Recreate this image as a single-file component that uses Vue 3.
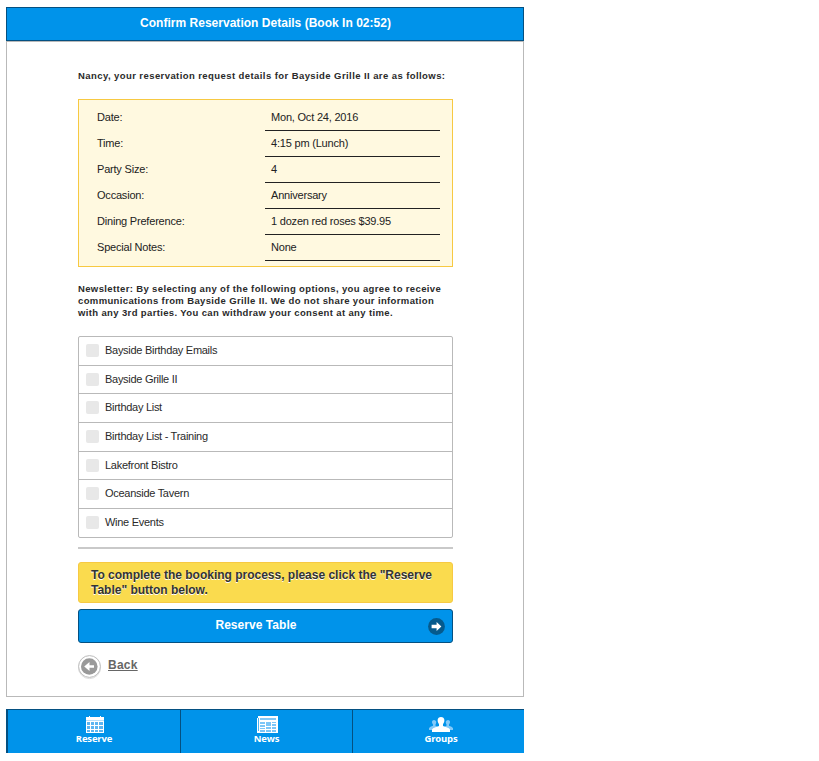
<script setup>
const details = [
  ['Date:', 'Mon, Oct 24, 2016'],
  ['Time:', '4:15 pm (Lunch)'],
  ['Party Size:', '4'],
  ['Occasion:', 'Anniversary'],
  ['Dining Preference:', '1 dozen red roses $39.95'],
  ['Special Notes:', 'None'],
]
const lists = [
  'Bayside Birthday Emails',
  'Bayside Grille II',
  'Birthday List',
  'Birthday List - Training',
  'Lakefront Bistro',
  'Oceanside Tavern',
  'Wine Events',
]
</script>

<template>
  <div class="page">
    <header class="title">Confirm Reservation Details (Book In 02:52)</header>
    <main class="panel">
      <p class="intro">Nancy, your reservation request details for Bayside Grille II are as follows:</p>
      <dl class="details">
        <div v-for="[label, value] in details" :key="label" class="detail">
          <dt>{{ label }}</dt>
          <dd>{{ value }}</dd>
        </div>
      </dl>
      <p class="newsletter">
        Newsletter: By selecting any of the following options, you agree to receive<br />
        communications from Bayside Grille II. We do not share your information<br />
        with any 3rd parties. You can withdraw your consent at any time.
      </p>
      <ul class="lists">
        <li v-for="name in lists" :key="name"><span class="check"></span><span class="name">{{ name }}</span></li>
      </ul>
      <hr class="rule" />
      <div class="notice">To complete the booking process, please click the "Reserve<br />Table" button below.</div>
      <button class="submit">
        <span class="submit-label">Reserve Table</span>
        <svg width="17" height="17" viewBox="0 0 17 17">
          <circle cx="8.5" cy="8.5" r="8.4" fill="#055a8d" />
          <path d="M3.600 6.800h5V4l4.800 4.500L8.600 13v-2.800h-5z" fill="#fff" />
        </svg>
      </button>
      <a class="back">
        <svg width="24" height="25" viewBox="0 0 24 25">
          <circle cx="11.500" cy="12.600" r="11" fill="none" stroke="#ddd" stroke-width="1" />
          <circle cx="11.500" cy="11.500" r="10.900" fill="#fff" stroke="#bbb" stroke-width="1" />
          <circle cx="11.300" cy="11.500" r="8.300" fill="#999" />
          <path d="M16 10.200h-4.500V7l-5.300 4.500 5.300 4.500v-3.200H16z" fill="#fff" />
        </svg>
        <span>Back</span>
      </a>
    </main>
    <nav class="tabs">
      <a class="tab reserve">
        <svg width="18" height="17" viewBox="0 0 18 17" shape-rendering="crispEdges">
          <path d="M0 1h18v16H0zM3 0h1v1H3zM14 0h1v1h-1z" fill="#fff" />
          <path d="M0 4h18v1H0z" fill="#b9e0fa" />
          <path d="M1 6h3v3H1zM5 6h3v3H5zM9 6h3v3H9zM13 6h4v3h-4zM1 10h3v3H1zM5 10h3v3H5zM9 10h3v3H9zM13 10h4v3h-4zM1 14h3v2H1zM5 14h3v2H5zM9 14h3v2H9zM13 14h4v2h-4z" fill="#5cb5f1" />
        </svg>
        <span>Reserve</span>
      </a>
      <a class="tab news">
        <svg width="21" height="17" viewBox="0 0 21 17" shape-rendering="crispEdges">
          <path d="M1 0h20v17H0V2h1z" fill="#fff" />
          <path d="M1 2h1v13H1z" fill="#4bb2f3" />
          <path d="M3 2h16v2H3z" fill="#83c9f7" />
          <path d="M3 6h5v2H3zM3 9h5v2H3zM3 12h5v1H3zM3 14h5v2H3zM9 6h5v4H9zM9 11h5v2H9zM9 14h5v2H9zM15 6h4v1h-4zM15 8h4v2h-4zM15 11h4v2h-4zM15 14h4v2h-4z" fill="#7cc6f7" />
        </svg>
        <span>News</span>
      </a>
      <a class="tab">
        <svg width="24" height="17" viewBox="0 -1 24 17">
          <path d="M0 13v-2q1-1.500 4-2.200V7.500Q2.700 6 3 4.500 3.300 3 5 3t2.200 1.500Q7.500 6 6.500 7.500v1.300L9 10v3zM24 13v-2q-1-1.500-4-2.200V7.500Q21.300 6 21 4.500 20.700 3 19 3t-2.200 1.500Q16.500 6 17.500 7.500v1.300L15 10v3z" fill="#83c9f8" />
          <path d="M3 15v-2.500q.5-1.500 3.500-2.300L10 9V7.200Q8.400 5.500 8.600 3 9 0 12 0t3.400 3Q15.600 5.500 14 7.200V9l3.500 1.200q3 .8 3.500 2.300V15z" fill="#fff" />
        </svg>
        <span>Groups</span>
      </a>
    </nav>
  </div>
</template>

<style>
body {
  margin: 0;
  background: #fff;
}
</style>

<style scoped>
.page {
  width: 518px;
  padding: 7px 0 0 6px;
  font: 11px "Liberation Sans", Arial, sans-serif;
  color: #2a2a2a;
}
.page * {
  box-sizing: border-box;
}
.title {
  height: 34px;
  padding-left: 1px;
  border: 1px solid #045081;
  background: #0093ea;
  color: #fff;
  font-size: 12px;
  font-weight: bold;
  line-height: 30px;
  letter-spacing: 0.02px;
  text-align: center;
}
.panel {
  height: 656px;
  border: 1px solid #b9b9b9;
  padding: 28px 70px 0 71px;
}
.intro,
.newsletter {
  margin: 0;
  font-size: 9.5px;
  font-weight: bold;
  line-height: 12px;
  letter-spacing: 0.42px;
  white-space: nowrap;
}
.details {
  height: 168px;
  margin: 17px 0 0;
  padding: 5px 12px 0 18px;
  border: 1px solid #f7c942;
  background: #fff9e0;
  color: #222;
  letter-spacing: -0.2px;
}
.detail {
  display: flex;
  height: 26px;
  line-height: 25px;
}
.detail dt {
  width: 168px;
}
.detail dd {
  flex: 1;
  margin: 0;
  padding-left: 6px;
  border-bottom: 1px solid #222;
}
.newsletter {
  margin-top: 16px;
  letter-spacing: 0.365px;
}
.lists {
  list-style: none;
  margin: 17px 0 0;
  padding: 0;
  border: 1px solid #b9b9b9;
  border-radius: 2px;
  letter-spacing: -0.28px;
}
.lists li {
  display: flex;
  align-items: center;
  gap: 6px;
  height: 29px;
  padding: 0 0 1px 7px;
  border-bottom: 1px solid #b9b9b9;
}
.lists li:nth-child(3n + 2) {
  height: 28px;
}
.lists li:last-child {
  height: 28px;
  border-bottom: 0;
}
.name {
  padding-bottom: 1px;
}
.check {
  width: 13px;
  height: 13px;
  border-radius: 2px;
  background: #e8e8e8;
}
.rule {
  height: 2px;
  margin: 9px 0 13px;
  border: 0;
  background: #c9c9c9;
}
.notice {
  height: 41px;
  padding: 5px 12px;
  border: 1px solid #f7c942;
  border-radius: 3px;
  background: #fadb4e;
  color: #333;
  font-size: 12px;
  font-weight: bold;
  line-height: 15px;
  letter-spacing: -0.01px;
  white-space: nowrap;
  text-shadow: 0 1px 0 #fff;
}
.submit {
  display: flex;
  align-items: center;
  width: 100%;
  height: 34px;
  margin-top: 6px;
  padding: 0 7px 0 0;
  border: 1px solid #045081;
  border-radius: 3px;
  background: #0093ea;
  color: #fff;
  font: bold 12px "Liberation Sans", Arial, sans-serif;
  letter-spacing: 0.05px;
}
.submit-label {
  flex: 1;
  padding: 0 0 2px 5px;
}
.back {
  display: flex;
  align-items: flex-start;
  gap: 6px;
  margin-top: 12px;
  color: #666;
  font-size: 12px;
  font-weight: bold;
  line-height: 20px;
  letter-spacing: 0.25px;
  text-decoration: underline;
}
.tabs {
  display: flex;
  height: 44px;
  margin-top: 12px;
  border-top: 1px solid #045081;
  border-left: 2px solid #045081;
  background: #0093ea;
}
.tab {
  display: flex;
  flex-direction: column;
  align-items: center;
  width: 173px;
  padding-top: 6px;
  border-right: 1px solid #045081;
  color: #fff;
  font: bold 9.5px/11px "Open Sans", sans-serif;
  letter-spacing: -0.18px;
}
.tab:nth-child(2) {
  width: 172px;
}
.reserve svg {
  margin-left: 2px;
}
.news svg {
  margin-left: 1px;
}
.tab:last-child {
  flex: 1;
  padding-left: 5px;
  border-right: 0;
}
</style>
